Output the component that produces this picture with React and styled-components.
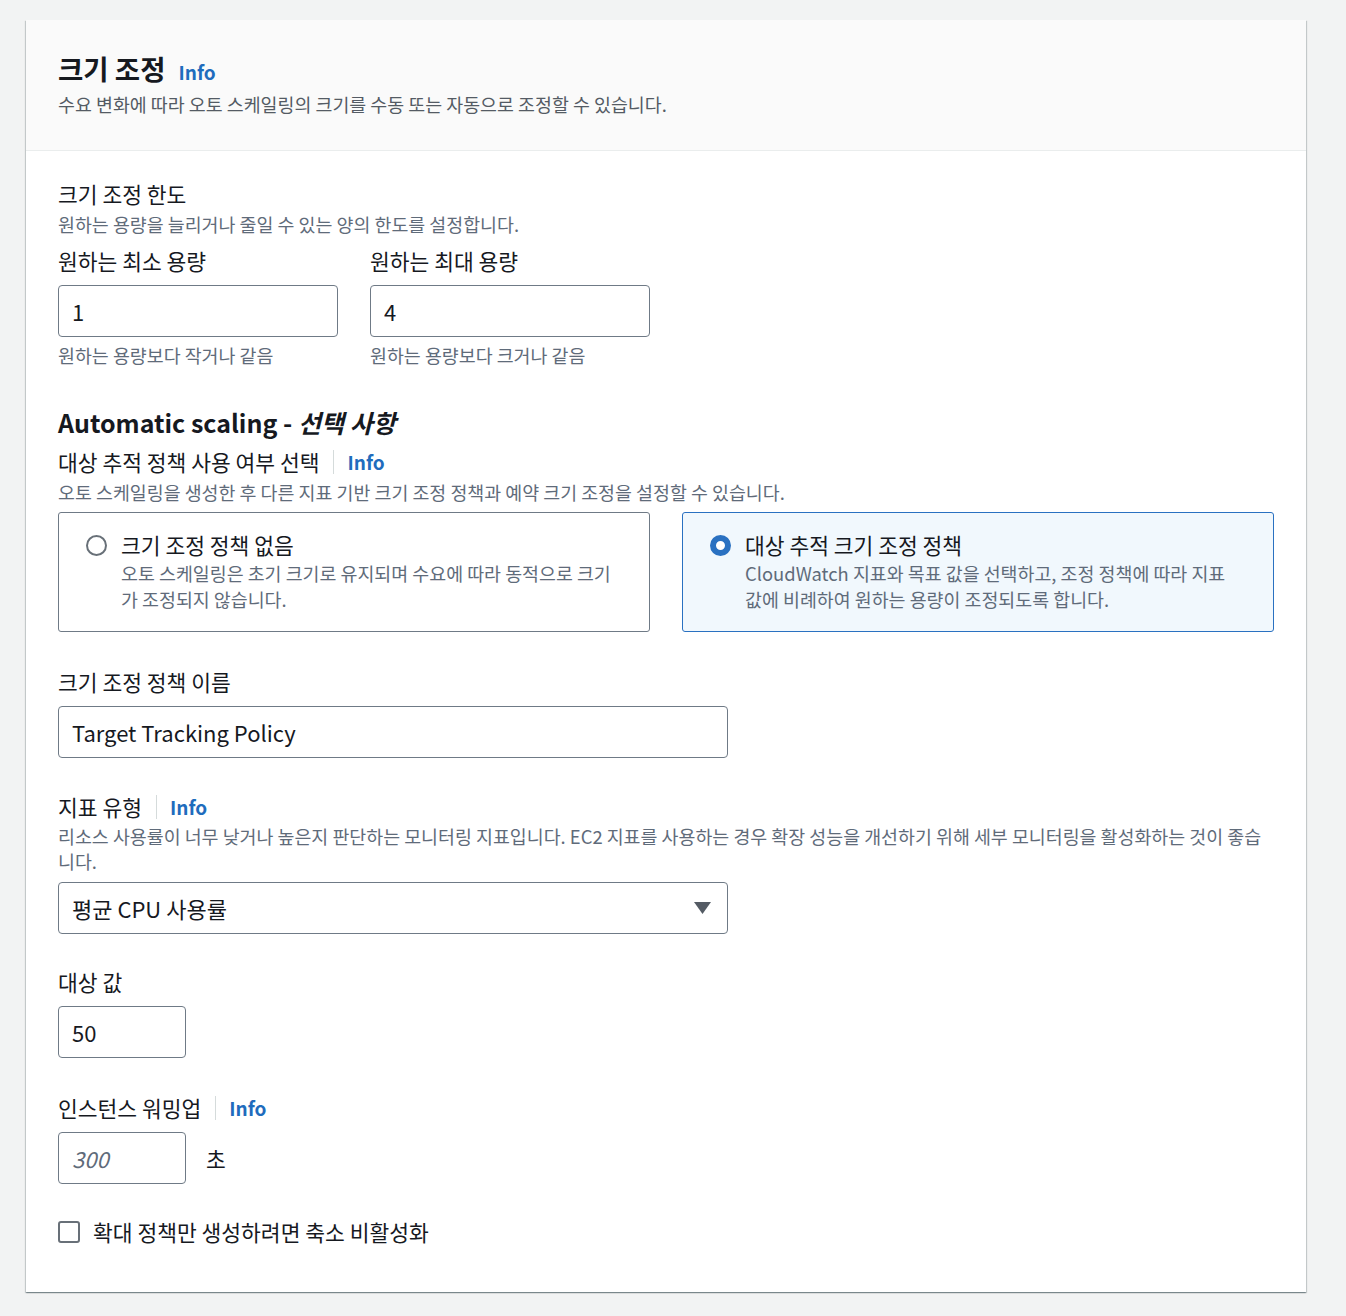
import { useState } from "react";
import styled, { createGlobalStyle } from "styled-components";

const GlobalStyle = createGlobalStyle`
  body {
    margin: 0;
    background: #f2f3f3;
    font-family: "Noto Sans CJK KR", "Noto Sans", sans-serif;
    color: #16191f;
  }
`;

const Page = styled.div`
  padding: 20px 40px 24px 26px;
`;

const Container = styled.section`
  width: 1280px;
  background: #fff;
  box-shadow: 0 1px 1px 0 rgba(0, 28, 36, 0.3), 1px 1px 1px 0 rgba(0, 28, 36, 0.15),
    -1px 1px 1px 0 rgba(0, 28, 36, 0.15);
`;

const Header = styled.header`
  background: #fafafa;
  border-bottom: 1px solid #eaeded;
  padding: 30px 32px 34px;
`;

const Title = styled.h2`
  margin: 0;
  height: 36px;
  font-size: 27.5px;
  line-height: 36px;
  font-weight: 700;
  display: flex;
  align-items: baseline;
  gap: 13px;
`;

const HeaderDesc = styled.p`
  margin: 6px 0 0;
  font-size: 18.4px;
  line-height: 24px;
  color: #545b64;
`;

const Body = styled.div`
  padding: 29px 32px 46px;
`;

const InfoLink = styled.a`
  color: #1f6cbd;
  font-weight: 700;
  font-size: 19px;
  text-decoration: none;
  cursor: pointer;
`;

const Label = styled.div`
  display: flex;
  align-items: center;
  font-size: 21.5px;
  line-height: 28px;
`;

const LabelWithInfo = styled(Label)`
  span.divider {
    width: 1px;
    height: 24px;
    background: #d5dbdb;
    margin: 0 13px 0 14px;
  }
`;

const Desc = styled.div`
  font-size: 18.4px;
  line-height: ${(p) => p.$lh || 24}px;
  color: #5f6b7a;
  margin-top: ${(p) => p.$mt || 0}px;
`;

const Field = styled.div`
  margin-top: ${(p) => p.$mt ?? 36}px;
`;

const Control = styled.div`
  margin-top: ${(p) => p.$mt ?? 10}px;
  display: flex;
  align-items: center;
  gap: 20px;
`;

const TextInput = styled.input`
  box-sizing: border-box;
  width: ${(p) => p.$w}px;
  height: 52px;
  padding: 0 13px;
  border: 1px solid #6f7a86;
  border-radius: 4px;
  font-family: inherit;
  font-size: 22px;
  color: #16191f;
  background: #fff;
  outline: none;

  &::placeholder {
    color: #5f6b7a;
    font-style: italic;
  }
`;

const Unit = styled.span`
  font-size: 21.5px;
`;

const LimitRow = styled.div`
  display: flex;
  gap: 32px;
  margin-top: 11px;
`;

const LimitCol = styled.div`
  width: 280px;
`;

const SectionTitle = styled.h3`
  margin: 38px 0 0;
  font-size: 25px;
  line-height: 34px;
  font-weight: 700;

  em {
    font-style: italic;
  }
`;

const TileGrid = styled.div`
  margin-top: 8px;
  display: grid;
  grid-template-columns: 592px 592px;
  gap: 32px;
`;

const Tile = styled.label`
  box-sizing: border-box;
  height: 120px;
  display: flex;
  gap: 14px;
  padding: 17px 32px 0 27px;
  border: 1px solid ${(p) => (p.$checked ? "#2a71c1" : "#6f7a86")};
  border-radius: 3px;
  background: ${(p) => (p.$checked ? "#f1f8fd" : "#fff")};
  cursor: pointer;
`;

const Radio = styled.span`
  flex: none;
  box-sizing: border-box;
  width: 21px;
  height: 21px;
  margin-top: 5px;
  border-radius: 50%;
  border: ${(p) => (p.$checked ? "6px solid #2a71c1" : "2px solid #687078")};
  background: #fff;
`;

const TileTitle = styled.div`
  font-size: 21.5px;
  line-height: 30px;
`;

const TileDesc = styled.div`
  font-size: 18.4px;
  line-height: 26px;
  color: #5f6b7a;
`;

const SelectBox = styled.div`
  box-sizing: border-box;
  width: 670px;
  height: 52px;
  padding: 0 16px 0 13px;
  display: flex;
  align-items: center;
  justify-content: space-between;
  border: 1px solid #6f7a86;
  border-radius: 4px;
  font-size: 22px;
  cursor: pointer;
`;

const CheckRow = styled.label`
  margin-top: 34px;
  display: flex;
  align-items: center;
  gap: 13px;
  font-size: 21.5px;
  line-height: 28px;
  cursor: pointer;
`;

const CheckBox = styled.span`
  box-sizing: border-box;
  width: 22px;
  height: 22px;
  border: 2px solid #687078;
  border-radius: 3px;
  background: #fff;
`;

export default function App() {
  const [policy, setPolicy] = useState("target");

  return (
    <Page>
      <GlobalStyle />
      <Container>
        <Header>
          <Title>
            크기 조정 <InfoLink>Info</InfoLink>
          </Title>
          <HeaderDesc>
            수요 변화에 따라 오토 스케일링의 크기를 수동 또는 자동으로 조정할 수 있습니다.
          </HeaderDesc>
        </Header>

        <Body>
          <Label>크기 조정 한도</Label>
          <Desc $mt={4}>원하는 용량을 늘리거나 줄일 수 있는 양의 한도를 설정합니다.</Desc>
          <LimitRow>
            <LimitCol>
              <Label>원하는 최소 용량</Label>
              <Control>
                <TextInput $w={280} defaultValue="1" />
              </Control>
              <Desc $mt={6}>원하는 용량보다 작거나 같음</Desc>
            </LimitCol>
            <LimitCol>
              <Label>원하는 최대 용량</Label>
              <Control>
                <TextInput $w={280} defaultValue="4" />
              </Control>
              <Desc $mt={6}>원하는 용량보다 크거나 같음</Desc>
            </LimitCol>
          </LimitRow>

          <SectionTitle>
            Automatic scaling - <em>선택 사항</em>
          </SectionTitle>
          <Field $mt={9}>
            <LabelWithInfo>
              대상 추적 정책 사용 여부 선택
              <span className="divider" />
              <InfoLink>Info</InfoLink>
            </LabelWithInfo>
            <Desc $mt={4}>
              오토 스케일링을 생성한 후 다른 지표 기반 크기 조정 정책과 예약 크기 조정을 설정할 수 있습니다.
            </Desc>
          </Field>
          <TileGrid>
            <Tile $checked={policy === "none"} onClick={() => setPolicy("none")}>
              <Radio $checked={policy === "none"} />
              <div>
                <TileTitle>크기 조정 정책 없음</TileTitle>
                <TileDesc>
                  오토 스케일링은 초기 크기로 유지되며 수요에 따라 동적으로 크기가 조정되지 않습니다.
                </TileDesc>
              </div>
            </Tile>
            <Tile $checked={policy === "target"} onClick={() => setPolicy("target")}>
              <Radio $checked={policy === "target"} />
              <div>
                <TileTitle>대상 추적 크기 조정 정책</TileTitle>
                <TileDesc>
                  CloudWatch 지표와 목표 값을 선택하고, 조정 정책에 따라 지표 값에 비례하여 원하는 용량이 조정되도록 합니다.
                </TileDesc>
              </div>
            </Tile>
          </TileGrid>

          <Field>
            <Label>크기 조정 정책 이름</Label>
            <Control>
              <TextInput $w={670} defaultValue="Target Tracking Policy" />
            </Control>
          </Field>

          <Field $mt={35}>
            <LabelWithInfo>
              지표 유형
              <span className="divider" />
              <InfoLink>Info</InfoLink>
            </LabelWithInfo>
            <Desc $mt={3} $lh={25}>
              리소스 사용률이 너무 낮거나 높은지 판단하는 모니터링 지표입니다. EC2 지표를 사용하는 경우 확장 성능을 개선하기 위해 세부 모니터링을 활성화하는 것이 좋습니다.
            </Desc>
            <Control $mt={8}>
              <SelectBox>
                평균 CPU 사용률
                <svg width="17" height="12" viewBox="0 0 17 12">
                  <path d="M0 0h17L8.5 12z" fill="#545b64" />
                </svg>
              </SelectBox>
            </Control>
          </Field>

          <Field $mt={34}>
            <Label>대상 값</Label>
            <Control>
              <TextInput $w={128} defaultValue="50" />
            </Control>
          </Field>

          <Field>
            <LabelWithInfo>
              인스턴스 워밍업
              <span className="divider" />
              <InfoLink>Info</InfoLink>
            </LabelWithInfo>
            <Control>
              <TextInput $w={128} placeholder="300" />
              <Unit>초</Unit>
            </Control>
          </Field>

          <CheckRow>
            <CheckBox />
            확대 정책만 생성하려면 축소 비활성화
          </CheckRow>
        </Body>
      </Container>
    </Page>
  );
}
